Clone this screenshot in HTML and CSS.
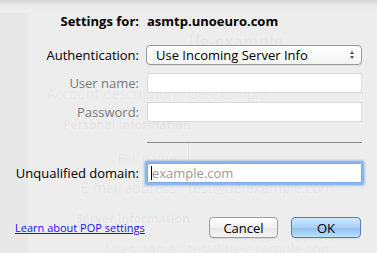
FILE: index.html
```html
<!DOCTYPE html>
<html lang="en">
<head>
  <meta charset="UTF-8">
  <title>Settings for asmtp.unoeuro.com</title>
  <link rel="stylesheet" href="styles.css">
</head>
<body>
  <div class="window">
    <!-- account window behind the sheet, faded -->
    <div class="backdrop">
      <div class="sidebar"></div>
      <div class="ghost">
        <div class="ghost-title">Ue-example</div>
        <div class="ghost-row ghost-desc"><span>Account description:</span><span>Ue-example</span></div>
        <div class="ghost-head ghost-personal">Personal information</div>
        <div class="ghost-row ghost-name"><span>Full name:</span><span class="ghost-field"></span></div>
        <div class="ghost-row ghost-mail"><span>E-mail address:</span><span>test@ue-example.com</span></div>
        <div class="ghost-head ghost-server">Server information</div>
        <div class="ghost-row ghost-user"><span>User name:</span><span>test@ue-example.com</span></div>
      </div>
    </div>

    <div class="sheet">
      <div class="row title-row">
        <span class="label">Settings for:</span>
        <span class="value">asmtp.unoeuro.com</span>
      </div>
      <div class="row auth-row">
        <span class="label">Authentication:</span>
        <div class="popup">
          <span>Use Incoming Server Info</span>
          <span class="arrows"><i class="up"></i><i class="down"></i></span>
        </div>
      </div>
      <div class="row user-row">
        <span class="label disabled">User name:</span>
        <div class="field disabled-field"></div>
      </div>
      <div class="row pass-row">
        <span class="label disabled">Password:</span>
        <div class="field disabled-field"></div>
      </div>
      <div class="row sep-row">
        <span class="label"></span>
        <div class="separator"></div>
      </div>
      <div class="row domain-row">
        <span class="label">Unqualified domain:</span>
        <div class="field focused"><span class="caret"></span><span class="placeholder">example.com</span></div>
      </div>
      <div class="footer">
        <a href="#" class="help-link">Learn about POP settings</a>
        <div class="buttons">
          <button class="btn">Cancel</button>
          <button class="btn btn-default">OK</button>
        </div>
      </div>
    </div>
  </div>
</body>
</html>
```

FILE: styles.css
```css
body {
  margin: 0;
  padding: 0;
  font-family: 'Open Sans', 'DejaVu Sans', sans-serif;
  background-color: #ececec;
  overflow: hidden;
}
.window {
  position: relative;
  width: 377px;
  height: 253px;
  overflow: hidden;
  background: linear-gradient(#d4d4d4, #e9e9e9 5px, #ededed 10px);
}
.backdrop {
  display: flex;
  align-items: flex-start;
  height: 100%;
}
.sidebar {
  align-self: stretch;
  width: 28px;
  margin-top: 13px;
  background-color: #e8e8e8;
}
.ghost {
  flex: 1;
  color: rgba(0, 0, 0, 0.045);
  font-size: 13px;
}
.ghost-title {
  margin: 32px 0 0 160px;
  font-size: 16px;
  font-weight: bold;
  line-height: 18px;
}
.ghost-row {
  display: grid;
  grid-template-columns: 152px 1fr;
  column-gap: 8px;
  line-height: 16px;
}
.ghost-row span:first-child {
  text-align: right;
}
.ghost-desc {
  margin-top: 36px;
  font-size: 14px;
}
.ghost-head {
  font-size: 12px;
  font-weight: bold;
  line-height: 14px;
}
.ghost-personal {
  margin: 16px 0 0 35px;
}
.ghost-name {
  margin-top: 18px;
  height: 30px;
}
.ghost-field {
  border-left: 1px solid rgba(0, 0, 0, 0.04);
  margin-top: -10px;
}
.ghost-mail {
  font-size: 14px;
}
.ghost-server {
  margin: 16px 0 0 48px;
}
.ghost-user {
  margin-top: 15px;
  font-size: 14px;
}

/* sheet */
.sheet {
  position: absolute;
  top: 0;
  left: 0;
  width: 377px;
  font-size: 13px;
  color: #000;
}
.row {
  display: grid;
  grid-template-columns: 139px 215px;
  column-gap: 8px;
  align-items: center;
}
.label {
  text-align: right;
  white-space: nowrap;
}
.label.disabled {
  color: #7b7b7b;
}
.title-row {
  margin-top: 12px;
  height: 18px;
  font-weight: bold;
}
.auth-row {
  margin-top: 15px;
}
.popup {
  display: flex;
  justify-content: space-between;
  align-items: center;
  height: 18px;
  margin-left: -1px;
  padding: 0 7px 0 9px;
  border: 1px solid #9a9a9a;
  border-radius: 4px;
  background: linear-gradient(#ffffff, #f3f3f3);
  box-shadow: 0 1px 0 rgba(0, 0, 0, 0.06);
}
.arrows {
  display: flex;
  flex-direction: column;
  gap: 2px;
}
.arrows i {
  width: 0;
  height: 0;
  border-left: 2.5px solid transparent;
  border-right: 2.5px solid transparent;
}
.arrows .up {
  border-bottom: 3px solid #555;
}
.arrows .down {
  border-top: 3px solid #555;
}
.field {
  height: 18px;
  background-color: #fff;
  border: 1px solid #c4c4c4;
  border-top-color: #b0b0b0;
}
.disabled-field {
  border-color: #dadada;
}
.user-row {
  margin-top: 8px;
}
.pass-row {
  margin-top: 9px;
}
.sep-row {
  margin-top: 20px;
}
.separator {
  height: 1px;
  background-color: #8e8e8e;
}
.domain-row {
  margin-top: 20px;
}
.field.focused {
  display: flex;
  align-items: center;
  border-color: #7ea9df;
  box-shadow: 0 0 0 2px #8ab9ef, 0 0 2px 3px rgba(110, 160, 230, 0.5);
  border-radius: 1px;
}
.caret {
  width: 1px;
  height: 14px;
  margin-left: 3px;
  background-color: #000;
}
.placeholder {
  color: #9a9a9a;
  font-size: 13px;
}
.footer {
  display: flex;
  justify-content: space-between;
  align-items: center;
  margin-top: 34px;
  padding: 0 16px 0 15px;
}
.help-link {
  font-size: 11px;
  color: #1a0dff;
  text-decoration: underline;
}
.buttons {
  display: flex;
  gap: 13px;
}
.btn {
  height: 21px;
  width: 69px;
  padding: 0;
  font-family: inherit;
  font-size: 13px;
  border: 1px solid #9c9c9c;
  border-radius: 4px;
  background: linear-gradient(#ffffff, #f0f0f0 50%, #e6e6e6 51%, #f4f4f4);
  box-shadow: 0 1px 0 rgba(0, 0, 0, 0.08);
}
.btn-default {
  width: 70px;
  border-color: #5a7db0;
  background: linear-gradient(#d3e7fb, #a9d0f6 50%, #8cc0f3 51%, #bfe0fb);
}
```
